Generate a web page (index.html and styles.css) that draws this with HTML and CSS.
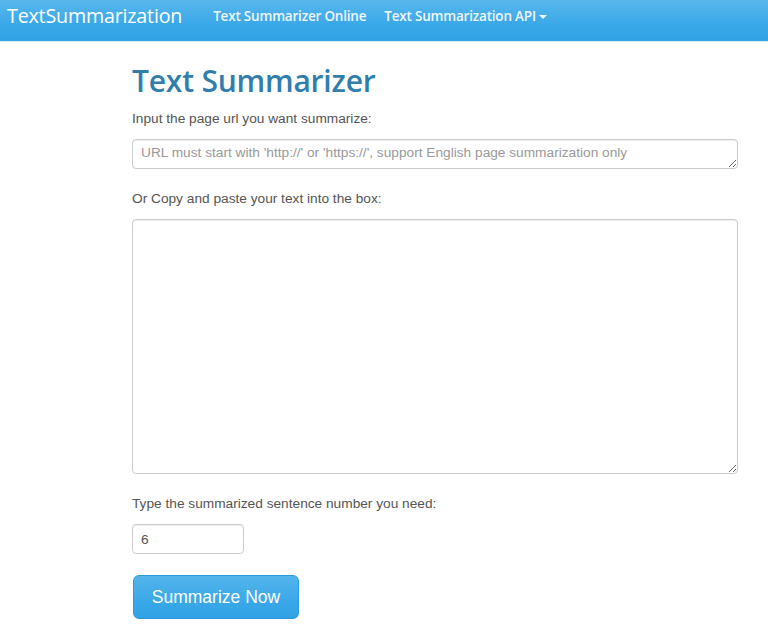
FILE: index.html
```html
<!DOCTYPE html>
<html>
<head>
<meta charset="utf-8">
<title>Text Summarizer</title>
<link rel="stylesheet" href="styles.css">
</head>
<body>
<nav class="navbar">
  <a class="brand" href="#">TextSummarization</a>
  <ul class="nav-links">
    <li><a href="#">Text Summarizer Online</a></li>
    <li><a href="#">Text Summarization API<span class="caret"></span></a></li>
  </ul>
</nav>
<main class="container">
  <h1 class="title">Text Summarizer</h1>
  <form class="form">
    <label class="label first" for="url">Input the page url you want summarize:</label>
    <textarea id="url" class="field url-field" placeholder="URL must start with 'http://' or 'https://', support English page summarization only"></textarea>
    <label class="label" for="text">Or Copy and paste your text into the box:</label>
    <textarea id="text" class="field text-field"></textarea>
    <label class="label" for="num">Type the summarized sentence number you need:</label>
    <input id="num" class="field num-field" type="text" value="6">
    <button type="button" class="btn">Summarize Now</button>
  </form>
</main>
</body>
</html>
```
FILE: styles.css
```css
* { box-sizing: border-box; }
html, body { margin: 0; padding: 0; }
body {
  background: #fff;
  font-family: "Liberation Sans", Arial, sans-serif;
  font-size: 14px;
  color: #555;
}
.navbar {
  height: 42px;
  display: flex;
  align-items: center;
  background: linear-gradient(#58b7ec, #3aa8e8 60%, #2fa2e5);
  border-bottom: 1px solid #d8ecf8;
  padding: 0 7px;
}
.brand {
  font-family: "Open Sans", sans-serif;
  font-size: 19.7px;
  color: #fff;
  text-decoration: none;
  letter-spacing: -0.2px;
  margin-top: -10px;
  margin-right: 31px;
}
.nav-links {
  list-style: none;
  display: flex;
  gap: 18px;
  margin: 0;
  padding: 0;
  margin-top: -10px;
}
.nav-links a {
  font-family: "Open Sans", sans-serif;
  font-size: 13.5px;
  font-weight: 600;
  color: #eef6fc;
  text-decoration: none;
  letter-spacing: -0.2px;
}
.caret {
  display: inline-block;
  width: 0; height: 0;
  margin-left: 3px;
  vertical-align: middle;
  border-top: 4px solid #eef6fc;
  border-left: 4px solid transparent;
  border-right: 4px solid transparent;
}
.container {
  width: 606px;
  margin-left: 132px;
}
.title {
  font-family: "Open Sans", sans-serif;
  font-weight: 600;
  font-size: 30px;
  color: #317eac;
  margin: 17px 0 0;
  line-height: 44px;
  letter-spacing: -0.2px;
}
.form { display: flex; flex-direction: column; align-items: flex-start; }
.label {
  font-size: 13.7px;
  color: #555;
  margin-top: 20px;
  line-height: 20px;
}
.label.first { margin-top: 6px; }
.field {
  font-family: "Liberation Sans", Arial, sans-serif;
  font-size: 13.7px;
  color: #555;
  border: 1px solid #ccc;
  border-radius: 4px;
  padding: 5px 8px;
  background: #fff;
  box-shadow: inset 0 1px 1px rgba(0,0,0,0.075);
  margin-top: 10px;
}
.field::placeholder { color: #999; }
.url-field { width: 606px; height: 30px; resize: vertical; overflow: hidden; }
.text-field { width: 606px; height: 255px; resize: vertical; }
.num-field { width: 112px; height: 30px; }
.btn {
  margin-top: 21px;
  margin-left: 1px;
  width: 166px;
  height: 44px;
  border: 1px solid #2a9ae0;
  border-radius: 6px;
  background: linear-gradient(#54b4eb, #3aa8e8 60%, #2fa2e5);
  color: #fff;
  font-family: "Liberation Sans", Arial, sans-serif;
  font-size: 17.5px;
}
```
